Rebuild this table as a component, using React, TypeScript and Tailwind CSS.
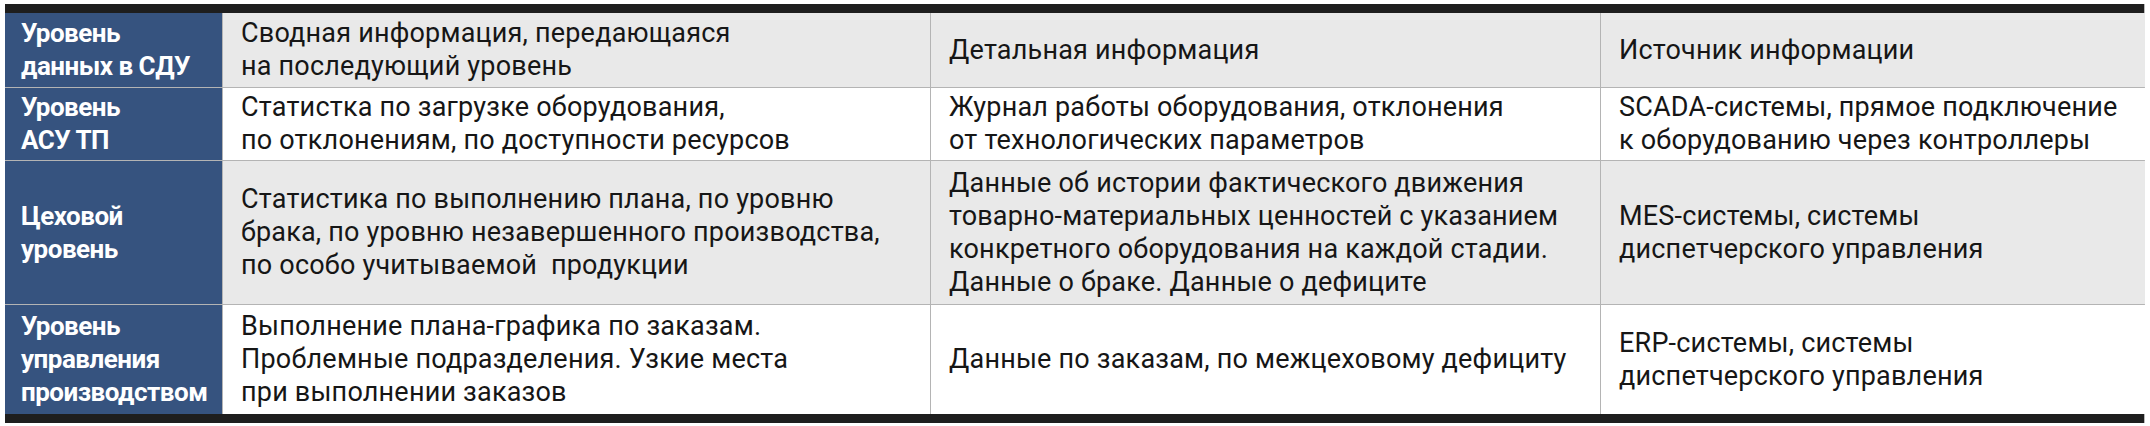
import React from "react";

type Row = {
  head: string[];
  bg: string;
  h: string;
  cells: string[][];
};

const rows: Row[] = [
  {
    head: ["Уровень", "данных в СДУ"],
    bg: "bg-[#e9e9e9]",
    h: "h-[75px]",
    cells: [
      ["Сводная информация, передающаяся", "на последующий уровень"],
      ["Детальная информация"],
      ["Источник информации"],
    ],
  },
  {
    head: ["Уровень", "АСУ ТП"],
    bg: "bg-white",
    h: "h-[73px]",
    cells: [
      ["Статистка по загрузке оборудования,", "по отклонениям, по доступности ресурсов"],
      ["Журнал работы оборудования, отклонения", "от технологических параметров"],
      ["SCADA-системы, прямое подключение", "к оборудованию через контроллеры"],
    ],
  },
  {
    head: ["Цеховой", "уровень"],
    bg: "bg-[#e9e9e9]",
    h: "h-[144px]",
    cells: [
      [
        "Статистика по выполнению плана, по уровню",
        "брака, по уровню незавершенного производства,",
        "по особо учитываемой\u00a0 продукции",
      ],
      [
        "Данные об истории фактического движения",
        "товарно-материальных ценностей с указанием",
        "конкретного оборудования на каждой стадии.",
        "Данные о браке. Данные о дефиците",
      ],
      ["MES-системы, системы", "диспетчерского управления"],
    ],
  },
  {
    head: ["Уровень", "управления", "производством"],
    bg: "bg-white",
    h: "h-[109px]",
    cells: [
      [
        "Выполнение плана-графика по заказам.",
        "Проблемные подразделения. Узкие места",
        "при выполнении заказов",
      ],
      ["Данные по заказам, по межцеховому дефициту"],
      ["ERP-системы, системы", "диспетчерского управления"],
    ],
  },
];

export default function App() {
  return (
    <div className="w-[2150px] h-[426px] bg-white pt-[4px] pl-[5px] overflow-hidden">
      <div
        className="w-[2140px] border-r border-[#b9b9b9] text-[27px] leading-[33px] tracking-[0.2px]"
        style={{ fontFamily: "Roboto, 'Noto Sans', sans-serif" }}
      >
        <div className="h-[9px] bg-[#1e1e1e]" />
        {rows.map((r, i) => (
          <div
            key={i}
            className={`grid grid-cols-[217px_709px_670px_544px] ${r.h} ${
              i < rows.length - 1 ? "border-b border-[#b4b4b4]" : ""
            }`}
          >
            <div className="bg-[#36537f] text-white font-bold text-[26px] tracking-[-0.5px] flex flex-col justify-center pl-[16px]">
              {r.head.map((t, j) => (
                <div key={j}>{t}</div>
              ))}
            </div>
            {r.cells.map((c, j) => (
              <div
                key={j}
                className={`${r.bg} text-[#161616] flex flex-col justify-center pl-[18px] ${
                  j < 2 ? "border-r border-[#b4b4b4]" : ""
                } ${j === 0 ? "border-l border-[#b4b4b4]" : ""}`}
              >
                {c.map((t, k) => (
                  <div key={k} className="whitespace-pre">
                    {t}
                  </div>
                ))}
              </div>
            ))}
          </div>
        ))}
        <div className="h-[9px] bg-[#1e1e1e]" />
      </div>
    </div>
  );
}
